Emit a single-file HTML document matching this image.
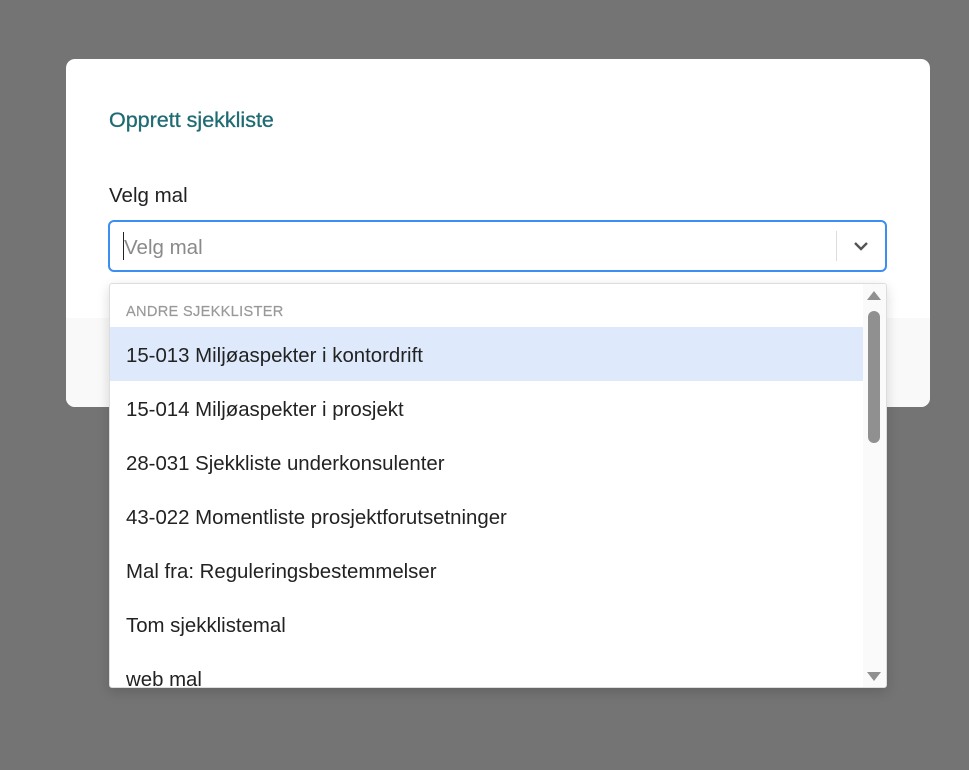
<!DOCTYPE html>
<html><head><meta charset="utf-8"><style>
*{box-sizing:border-box;margin:0;padding:0}
body{width:969px;height:770px;background:#737473;position:relative;overflow:hidden;font-family:"Liberation Sans",sans-serif}
.modal{position:absolute;left:66px;top:59px;width:864px;height:348px;background:#fff;border-radius:9px;overflow:hidden}
.foot{position:absolute;left:0;right:0;top:259px;bottom:0;background:#f9f9f9}
.title{position:absolute;left:43px;top:49px;font-size:21.5px;color:#1f6b73;font-weight:500;-webkit-text-stroke:0.3px #1f6b73}
.label{position:absolute;left:43px;top:125px;font-size:20.5px;color:#222}
.input{position:absolute;left:42px;top:161px;width:779px;height:52px;border:2px solid #3c8ef0;border-radius:6px;background:#fff}
.input .ph{position:absolute;left:14px;top:14px;font-size:20.5px;color:#8a8a8a}
.input .caret{position:absolute;left:13px;top:10px;width:1px;height:28px;background:#222}
.input .sep{position:absolute;left:726px;top:9px;width:1px;height:30px;background:#ddd}
.input svg{position:absolute;left:742px;top:18px}
.dd{position:absolute;left:109px;top:283px;width:778px;height:405px;background:#fff;border:1px solid #ddd;border-radius:3px;overflow:hidden;box-shadow:0 4px 12px rgba(0,0,0,.15)}
.hdr{position:absolute;left:16px;top:20px;font-size:14.6px;color:#999;letter-spacing:.3px;-webkit-text-stroke:0.2px #999}
.item{position:absolute;left:0;width:755px;height:54px;font-size:20.4px;color:#222;padding-left:16px;line-height:58px}
.hl{background:#deeafb}
.track{position:absolute;right:0;top:0;width:23px;height:100%;background:#fafafa}
.thumb{position:absolute;left:5px;top:27px;width:12px;height:132px;border-radius:6px;background:#909090}
</style></head><body>
<div class="modal">
<div class="foot"></div>
<div class="title">Opprett sjekkliste</div>
<div class="label">Velg mal</div>
<div class="input"><span class="caret"></span><span class="ph">Velg mal</span><span class="sep"></span>
<svg width="18" height="12" viewBox="0 0 18 12"><path d="M3 3l6 6 6-6" fill="none" stroke="#555" stroke-width="2.4"/></svg></div>
</div>
<div class="dd">
<div class="hdr">ANDRE SJEKKLISTER</div>
<div class="item hl" style="top:43px">15-013 Miljøaspekter i kontordrift</div>
<div class="item" style="top:97px">15-014 Miljøaspekter i prosjekt</div>
<div class="item" style="top:151px">28-031 Sjekkliste underkonsulenter</div>
<div class="item" style="top:205px">43-022 Momentliste prosjektforutsetninger</div>
<div class="item" style="top:259px">Mal fra: Reguleringsbestemmelser</div>
<div class="item" style="top:313px">Tom sjekklistemal</div>
<div class="item" style="top:367px">web mal</div>
<div class="track">
<svg style="position:absolute;left:3px;top:6px" width="16" height="11"><path d="M8 1L15 10H1z" fill="#909090"/></svg>
<div class="thumb"></div>
<svg style="position:absolute;left:3px;top:387px" width="16" height="11"><path d="M1 1H15L8 10z" fill="#909090"/></svg>
</div>
</div>
</body></html>
